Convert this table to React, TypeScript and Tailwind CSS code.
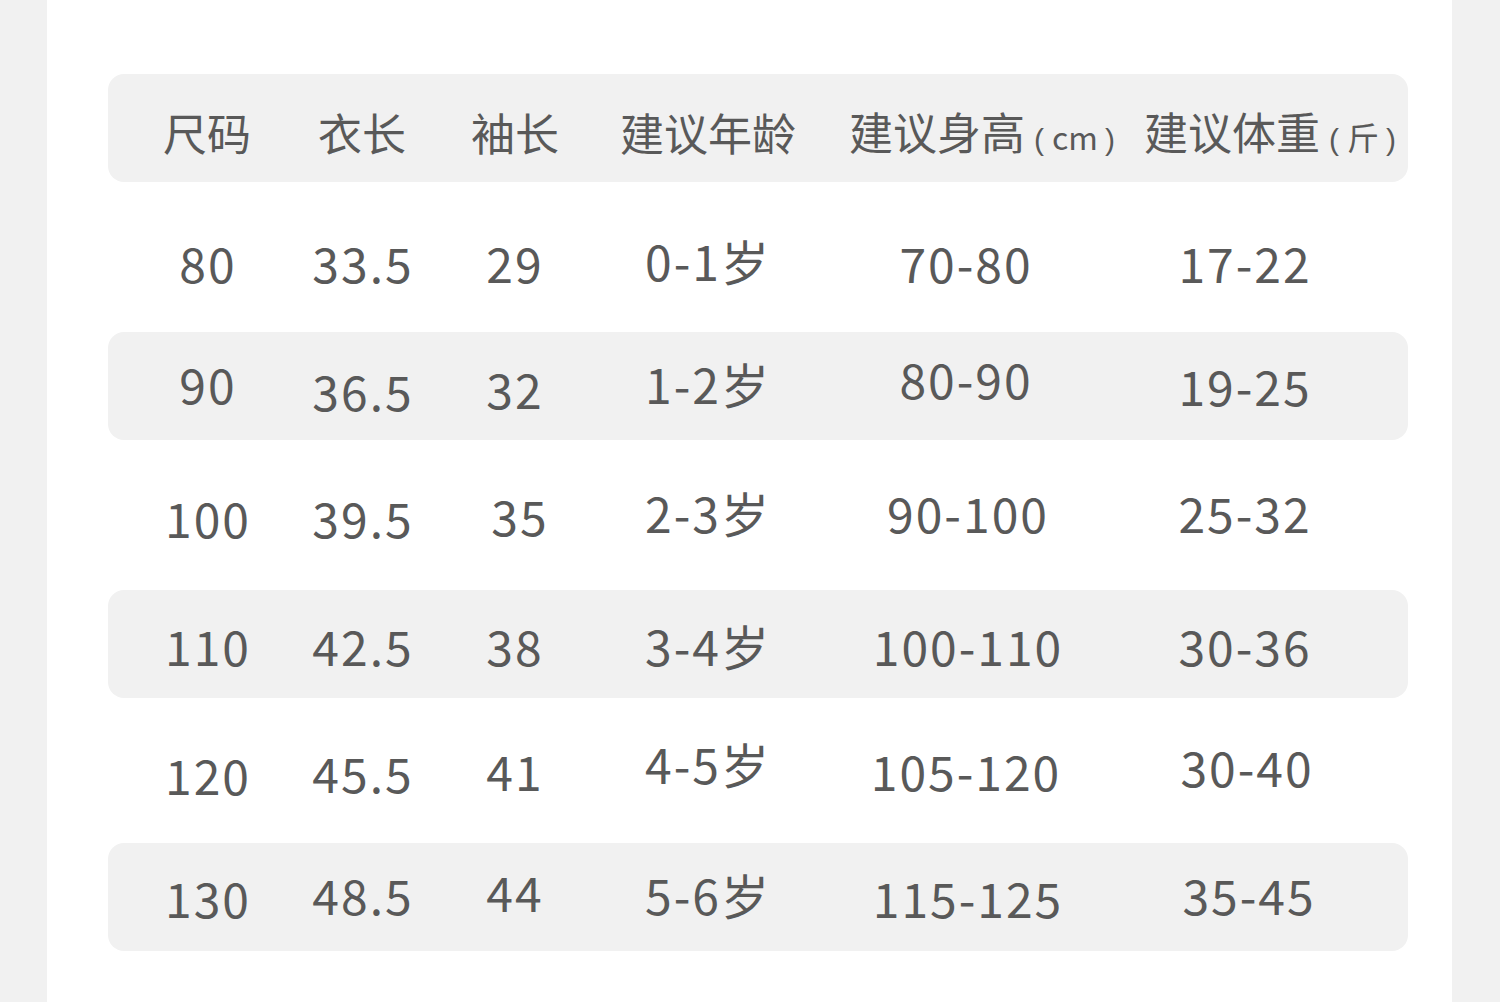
type Cell = { t: string; c?: string };
type Row = { gray: boolean; h: string; cells: Cell[] };

const cols = "grid grid-cols-[200px_110px_194px_192px_324px_234px]";

const rows: Row[] = [
  {
    gray: false,
    h: "h-[150px]",
    cells: [
      { t: "80", c: "pt-[10px]" },
      { t: "33.5", c: "pt-[10px]" },
      { t: "29", c: "pt-[10px]" },
      { t: "0-1岁", c: "pt-[6px]" },
      { t: "70-80", c: "pt-[10px]" },
      { t: "17-22", c: "pt-[10px]" },
    ],
  },
  {
    gray: true,
    h: "h-[108px]",
    cells: [
      { t: "90", c: "pb-[6px]" },
      { t: "36.5", c: "pt-[8px]" },
      { t: "32", c: "pt-[4px]" },
      { t: "1-2岁", c: "pb-[6px]" },
      { t: "80-90", c: "pb-[16px]" },
      { t: "19-25", c: "pb-[2px]" },
    ],
  },
  {
    gray: false,
    h: "h-[150px]",
    cells: [
      { t: "100", c: "pt-[4px]" },
      { t: "39.5", c: "pt-[4px]" },
      { t: "35", c: "pl-[10px]" },
      { t: "2-3岁", c: "pb-[6px]" },
      { t: "90-100", c: "pb-[6px] pl-[4px]" },
      { t: "25-32", c: "pb-[6px]" },
    ],
  },
  {
    gray: true,
    h: "h-[108px]",
    cells: [
      { t: "110", c: "pt-[2px]" },
      { t: "42.5", c: "pt-[2px]" },
      { t: "38", c: "pt-[2px]" },
      { t: "3-4岁", c: "pt-[2px]" },
      { t: "100-110", c: "pt-[2px] pl-[4px]" },
      { t: "30-36", c: "pt-[2px]" },
    ],
  },
  {
    gray: false,
    h: "h-[145px]",
    cells: [
      { t: "120", c: "pt-[6px]" },
      { t: "45.5", c: "pt-[2px]" },
      { t: "41", c: "pb-[2px]" },
      { t: "4-5岁", c: "pb-[16px]" },
      { t: "105-120", c: "pb-[2px]" },
      { t: "30-40", c: "pb-[10px] pl-[4px]" },
    ],
  },
  {
    gray: true,
    h: "h-[108px]",
    cells: [
      { t: "130" },
      { t: "48.5", c: "pb-[6px]" },
      { t: "44", c: "pb-[12px]" },
      { t: "5-6岁", c: "pb-[6px]" },
      { t: "115-125", c: "pl-[4px]" },
      { t: "35-45", c: "pb-[6px] pl-[8px]" },
    ],
  },
];

function Unit({ u }: { u: string }) {
  const paren = "font-['Liberation_Sans',sans-serif] text-[30px]";
  return (
    <span className="ml-[9px] text-[32px]">
      <span className={paren}>(</span>
      <span className="ml-[8px] mr-[7px]">{u}</span>
      <span className={paren}>)</span>
    </span>
  );
}

function Header() {
  return (
    <div className={`${cols} h-[108px] rounded-2xl bg-[#f1f1f1] text-[44px] leading-none`}>
      <div className="flex items-center justify-center pt-[8px] pr-[2px]">尺码</div>
      <div className="flex items-center justify-center pt-[8px] pr-[2px]">衣长</div>
      <div className="flex items-center justify-center pt-[8px]">袖长</div>
      <div className="flex items-center justify-center pt-[8px]">建议年龄</div>
      <div className="flex items-center justify-center whitespace-nowrap pt-[8px] pl-[32px]">
        <span>
          建议身高<Unit u="cm" />
        </span>
      </div>
      <div className="flex items-center justify-center whitespace-nowrap pt-[8px] pl-[50px]">
        <span>
          建议体重<Unit u="斤" />
        </span>
      </div>
    </div>
  );
}

export default function App() {
  return (
    <div className="min-h-[1002px] w-full bg-[#f1f1f1] font-['Noto_Sans_CJK_SC','Noto_Sans',sans-serif] text-[#595959]">
      <div className="ml-[47px] w-[1405px] min-h-[1002px] bg-white pl-[61px] pt-[74px]">
        <div className="w-[1300px]">
          <Header />
          {rows.map((r, i) => (
            <div
              key={i}
              className={`${cols} ${r.h} rounded-2xl ${r.gray ? "bg-[#f1f1f1]" : "bg-white"} text-[48px] leading-none tracking-[2px]`}
            >
              {r.cells.map((c, j) => (
                <div key={j} className={`flex items-center justify-center whitespace-nowrap ${c.c ?? ""}`}>
                  {c.t}
                </div>
              ))}
            </div>
          ))}
        </div>
      </div>
    </div>
  );
}
